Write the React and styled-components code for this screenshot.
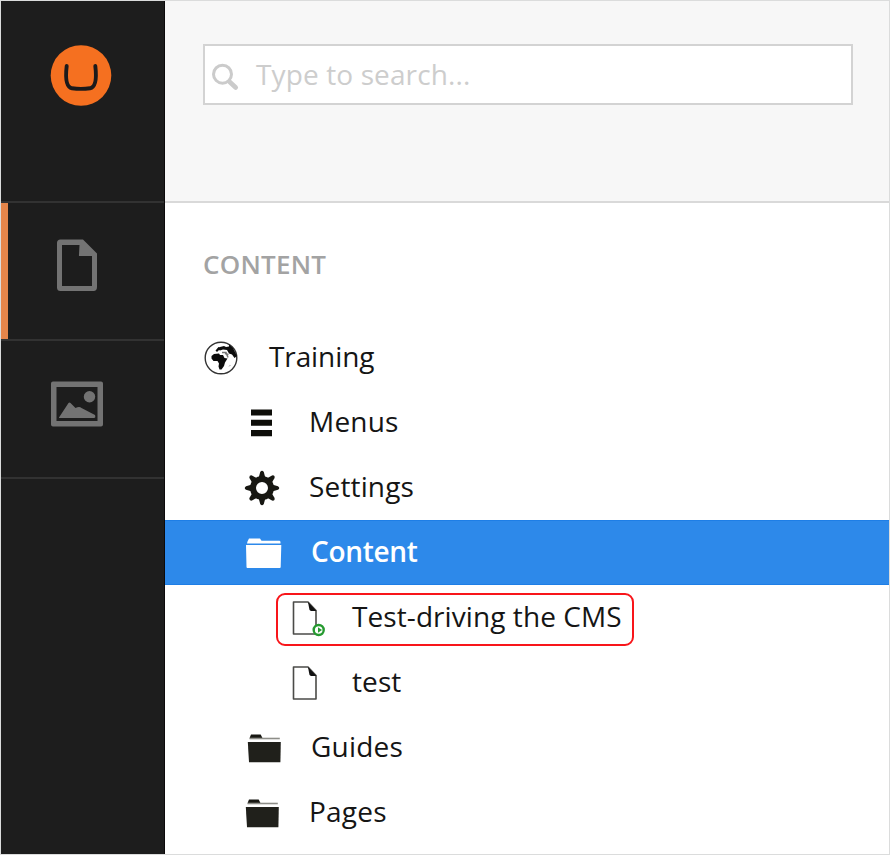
import React from "react";
import styled, { createGlobalStyle } from "styled-components";

const GlobalStyle = createGlobalStyle`
  * { box-sizing: border-box; }
  body { margin: 0; font-family: "Open Sans", "Noto Sans", sans-serif; }
`;

const Frame = styled.div`
  display: flex;
  width: 890px;
  height: 855px;
  border: 1px solid #dbdcdc;
  background: #fff;
  overflow: hidden;
`;

const Sidebar = styled.nav`
  display: flex;
  flex-direction: column;
  flex: none;
  width: 163.5px;
  background: #1d1d1d;
  border-right: 1px solid #0c0a0b;
`;

const Brand = styled.div`
  height: 202px;
  padding: 43px 0 0 48px;
  border-bottom: 2px solid #323232;
`;

const Section = styled.div`
  display: flex;
  height: 138px;
  padding: 33px 0 0 48px;
  box-shadow: ${(p) => (p.$active ? "inset 7px 0 #e5854a" : "none")};
  border-bottom: 2px solid #323232;
`;

const Main = styled.main`
  display: flex;
  flex-direction: column;
  flex: 1;
  padding-left: 0.5px;
`;

const Header = styled.header`
  flex: none;
  height: 202px;
  padding: 43px 36px 0 38px;
  background: #f7f7f7;
  border-bottom: 2px solid #d9d9d9;
`;

const SearchBox = styled.div`
  display: flex;
  align-items: center;
  height: 61px;
  width: 650px;
  background: #fff;
  border: 2px solid #d3d3d3;
`;

const Placeholder = styled.span`
  margin: -1px 0 0 11px;
  font-size: 28px;
  letter-spacing: 0.12px;
  color: #cdcdcd;
  white-space: pre;
`;

const TreeTitle = styled.h2`
  margin: 0;
  height: 122px;
  padding: 43px 0 0 38px;
  font-size: 26px;
  line-height: 36px;
  font-weight: 600;
  letter-spacing: 0.25px;
  color: #a3a3a3;
`;

const Row = styled.div`
  display: flex;
  align-items: center;
  flex: none;
  height: 65px;
  padding-left: ${(p) => p.$indent}px;
  color: ${(p) => (p.$selected ? "#fff" : "#151515")};
  background: ${(p) => (p.$selected ? "#2d89ea" : "transparent")};
  box-shadow: ${(p) => (p.$selected ? "inset 0 1px #1e7ee6, inset 0 -1px #1e7ee6" : "none")};
`;

const Highlight = styled.div`
  display: flex;
  align-items: center;
  width: 358px;
  height: 53px;
  margin: 4px 0 0 -9px;
  padding: 0 0 4px 7px;
  border: 2px solid #f8151a;
  border-radius: 9px;
`;

const Label = styled.span`
  margin-left: ${(p) => p.$gap}px;
  margin-top: ${(p) => (p.$bold ? -3 : -4)}px;
  font-size: 28px;
  line-height: 40px;
  font-weight: ${(p) => (p.$bold ? 600 : 400)};
  letter-spacing: ${(p) => p.$spacing}px;
  white-space: nowrap;
`;

const Icon = styled.svg`
  display: block;
  flex: none;
  width: ${(p) => p.$size || 40}px;
  height: ${(p) => p.$size || 40}px;
`;

const Logo = () => (
  <Icon $size={64} viewBox="0 0 64 64">
    <circle cx="32" cy="31.500" r="30.300" fill="#f57020" />
    <path d="M17.700 22C16.500 32 16.500 43 23 44.300Q32 45.500 41 44.300C47.500 43 47.500 32 46.300 22" fill="none" stroke="#1c1a1b" strokeWidth="3.900" strokeLinecap="round" />
  </Icon>
);

const PageSection = () => (
  <Icon $size={60} viewBox="0 0 60 60" fill="#737373">
    <path fillRule="evenodd" d="M11 3.500H34L48 17.500V51Q48 55 44.500 55H11.500Q8 55 8 51.500V7Q8 3.500 11.500 3.500ZM13 9V50H43V20H31Q29.500 20 30 18.500L30.500 9Z" />
  </Icon>
);

const MediaSection = () => (
  <Icon $size={60} viewBox="0 0 60 60" fill="#737373">
    <path fillRule="evenodd" d="M4 7.500H52Q54 7.500 54 9.500V50.500Q54 52.500 52 52.500H4Q2 52.500 2 50.500V9.500Q2 7.500 4 7.500ZM7.500 13V47H48.500V13Z" />
    <circle cx="40.500" cy="22.700" r="5.700" />
    <path d="M10 43.500 19.500 29q1-1 2 0l5 5q4-2 6 0L46 41q1 3-1 3H11Q9.500 44 10 43.500Z" />
  </Icon>
);

const SearchIcon = () => (
  <Icon viewBox="0 0 40 40" fill="none" stroke="#cbcbcb">
    <circle cx="17.500" cy="19.200" r="9" strokeWidth="3" />
    <path d="m24.500 26.700 6.200 5.700" strokeWidth="4.700" strokeLinecap="round" />
  </Icon>
);

const Globe = () => (
  <Icon viewBox="0 0.500 40 40">
    <circle cx="20" cy="20.500" r="15.800" fill="#fff" stroke="#333" strokeWidth="1.400" />
    <g fill="#0c0c0c">
      <path d="M10.500 18.500 13 16.500l5-.5 1 1.500 3 0 1.500 3 3 .500-2.500 4-1 3.500-2.500 3.500h-2L17.500 29l.5-3-1.500-2.500-4 0-2-2.500Z" />
      <path d="m28 7 4 3.500 4 8-2.500 2-2.500-3.500-3-1-2-3.500-4-.5-3 1-2-1 2-2.500 4-1 2 1 3-.5Z" />
      <path d="m14.500 13 3-3.500 2 .5-1.500 2.500-2 2Z" />
    </g>
    <path d="m21 15 4 0 2 5m-3-4 3.500 1" stroke="#777" strokeWidth="1.500" fill="none" />
    <path d="M28 29q1-2 1.500-1" stroke="#aaa" fill="none" />
  </Icon>
);

const Menu = () => (
  <Icon viewBox="0 0.500 40 40" fill="#0e0e0a">
    <path d="M9 7h21v5.900h-21zM9 17.300h21v5.900h-21zM9 27.600h21v6.200h-21z" />
  </Icon>
);

const Gear = () => (
  <Icon viewBox="-20 -20 40 40">
    <circle r="9" fill="none" stroke="#171712" strokeWidth="6" />
    {[0, 45, 90, 135, 180, 225, 270, 315].map((a) => (
      <path key={a} transform={`rotate(${a})`} d="M-3.400-10-1.800-16Q0-18.500 1.800-16L3.400-10Z" fill="#171712" />
    ))}
  </Icon>
);

const FolderOpen = () => (
  <Icon viewBox="0.500 0.500 40 40" fill="#fff">
    <path d="M6 9 7.500 6h11l1.500 2.300h18q1 0 1 1.500V11H5.500Z" />
    <path d="M4.500 12.500h35.300l-.6 22q0 1-1 1H6q-1 0-1-1Z" />
  </Icon>
);

const Folder = ({ shift = 0 }) => (
  <Icon viewBox={`${-shift} 1 40 40`}>
    <path d="M5.800 10.500 7 7.500h9.700l1.500 3V11.500H5.800Z" fill="#171712" />
    <path d="M5.500 11.500h30.300" stroke="#8d8d88" strokeWidth="1.600" />
    <path d="M3.800 15h33l-.4 20.300H5Z" fill="#20201b" />
  </Icon>
);

const Doc = ({ badge }) => (
  <Icon viewBox="0 0.500 40 40">
    <path d="M8.500 4.500H23l8 8.500V36.500H8.500Z" fill="#fff" stroke="#4b4b48" strokeWidth="1.600" strokeLinejoin="round" />
    <path d="m23 4.500 8.500 9H26Q24 13 24 10Z" fill="#111" />
    {badge && (
      <>
        <circle cx="33.700" cy="32.500" r="5" fill="#fff" stroke="#269a30" strokeWidth="2.400" />
        <path d="m33 29.800 4 2.700L33 35.200Z" fill="#269a30" />
      </>
    )}
  </Icon>
);

const items = [
  { text: "Training", icon: <Globe />, indent: 36, gap: 28, spacing: -0.1 },
  { text: "Menus", icon: <Menu />, indent: 77, gap: 27, spacing: 0.2 },
  { text: "Settings", icon: <Gear />, indent: 77, gap: 27, spacing: 0.15 },
  { text: "Content", icon: <FolderOpen />, indent: 77, gap: 29, spacing: -0.3, selected: true },
  { text: "Test-driving the CMS", icon: <Doc badge />, indent: 120, gap: 27, spacing: 0.08, highlighted: true },
  { text: "test", icon: <Doc />, indent: 120, gap: 27, spacing: 0.1 },
  { text: "Guides", icon: <Folder shift={2} />, indent: 77, gap: 29, spacing: 0.2 },
  { text: "Pages", icon: <Folder />, indent: 77, gap: 27, spacing: 0.2 },
];

const TreeItem = ({ item }) => {
  const body = (
    <>
      {item.icon}
      <Label $gap={item.gap} $spacing={item.spacing} $bold={item.selected}>{item.text}</Label>
    </>
  );
  return (
    <Row $indent={item.indent} $selected={item.selected}>
      {item.highlighted ? <Highlight>{body}</Highlight> : body}
    </Row>
  );
};

export default function App() {
  return (
    <>
      <GlobalStyle />
      <Frame>
        <Sidebar>
          <Brand><Logo /></Brand>
          <Section $active><PageSection /></Section>
          <Section><MediaSection /></Section>
        </Sidebar>
        <Main>
          <Header>
            <SearchBox>
              <SearchIcon />
              <Placeholder>Type to search...</Placeholder>
            </SearchBox>
          </Header>
          <TreeTitle>CONTENT</TreeTitle>
          {items.map((item) => <TreeItem key={item.text} item={item} />)}
        </Main>
      </Frame>
    </>
  );
}
